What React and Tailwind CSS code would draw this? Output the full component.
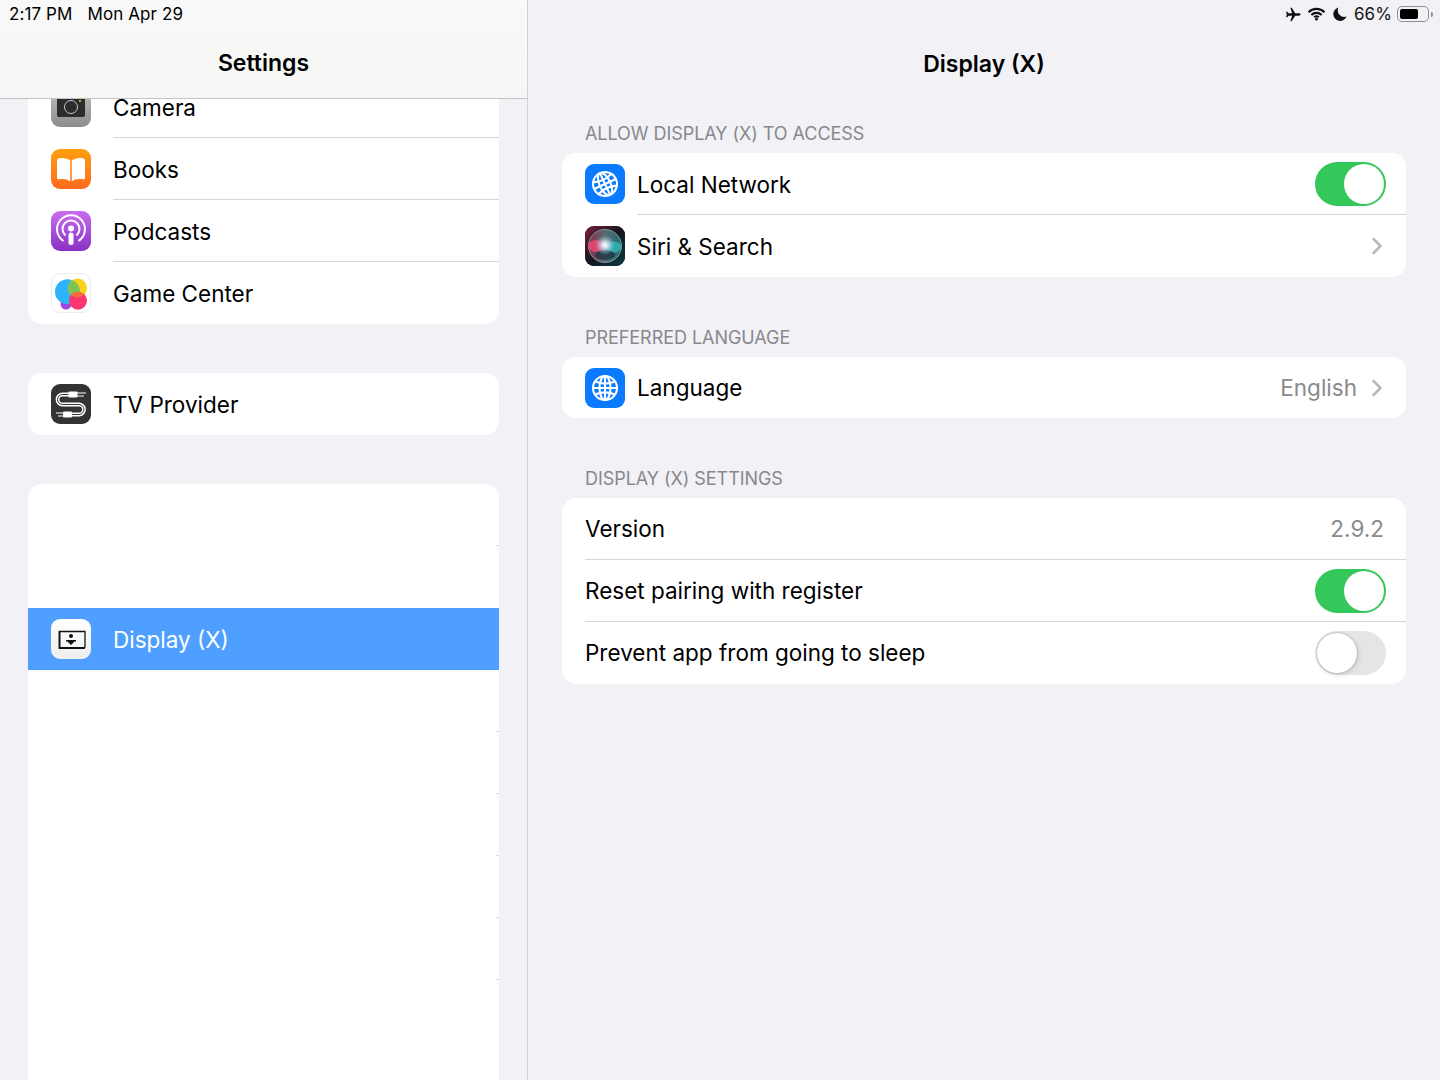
import React from 'react';
import { ChevronRight } from 'lucide-react';

const Globe = ({ tilt }) => (
    <svg viewBox="0 0 28 28" className="w-[28px] h-[28px]" fill="none" stroke="white" strokeWidth="2.1">
        <g transform={tilt ? 'rotate(-25 14 14)' : undefined}>
            <circle cx="14" cy="14" r="12" />
            <ellipse cx="14" cy="14" rx="5.5" ry="12" />
            <path d="M14 2v24M2 14h24M4 7.5c6 2.500 14 2.500 20 0M4 20.500c6-2.500 14-2.500 20 0" />
        </g>
    </svg>
);

const IconBox = ({ className, children }) => (
    <div className={`w-[40px] h-[40px] rounded-[9px] shrink-0 flex items-center justify-center overflow-hidden ${className}`}>
        {children}
    </div>
);

const CameraIcon = () => (
    <IconBox className="bg-gradient-to-b from-[#c4c4c4] to-[#8c8c8e]">
        <div className="w-[28px] h-[20px] bg-[#2c2c2e] rounded-[2px] relative flex items-center justify-center">
            <div className="w-[14px] h-[14px] rounded-full border-[1.5px] border-[#c8c8c8]" />
            <div className="absolute top-[3px] right-[4px] w-[2px] h-[2px] rounded-full bg-[#f5d90a]" />
        </div>
    </IconBox>
);

const BooksIcon = () => (
    <IconBox className="bg-gradient-to-b from-[#ff9f0a] to-[#fd6a1e]">
        <svg viewBox="0 0 28 25" className="w-[28px] h-[25px]">
            <path d="M13.200 3.500C11 1.500 5 .5 1.500 1.500 .6 1.800 0 2.500 0 3.500V21c0 1 1 1.500 2 1.300 4-.8 9-.2 11.200 2.200z" fill="white" />
            <path d="M14.800 3.500C17 1.500 23 .5 26.500 1.500 27.400 1.800 28 2.500 28 3.500V21c0 1-1 1.500-2 1.300-4-.8-9-.2-11.200 2.200z" fill="white" />
        </svg>
    </IconBox>
);

const PodcastsIcon = () => (
    <IconBox className="bg-gradient-to-b from-[#c86df0] to-[#8a2fc4]">
        <svg viewBox="0 0 34 34" className="w-[34px] h-[34px]" fill="none" stroke="white" strokeWidth="2">
            <path d="M9.500 27A14 14 0 1 1 24.500 27" />
            <path d="M11.500 21.500A8.500 8.500 0 1 1 22.500 21.500" />
            <circle cx="17" cy="14.500" r="3" fill="white" stroke="none" />
            <rect x="14.500" y="18.500" width="5" height="12.500" rx="2.500" fill="white" stroke="none" />
        </svg>
    </IconBox>
);

const GameCenterIcon = () => (
    <IconBox className="bg-white border border-[#ececec]">
        <svg viewBox="0 0 40 40" className="w-[40px] h-[40px] shrink-0">
            <defs>
                <clipPath id="gcBlue"><circle cx="16.500" cy="18.700" r="12.500" /></clipPath>
                <clipPath id="gcYellow"><circle cx="26.500" cy="15" r="9.500" /></clipPath>
            </defs>
            <circle cx="15" cy="31" r="5.500" fill="#a245e0" />
            <circle cx="16.500" cy="18.700" r="12.500" fill="#2fb4fb" />
            <circle cx="26.500" cy="15" r="9.500" fill="#f8d21f" />
            <circle cx="26.500" cy="15" r="9.500" fill="#7dc44f" clipPath="url(#gcBlue)" />
            <circle cx="27" cy="27.700" r="9" fill="#f9366f" />
            <circle cx="27" cy="27.700" r="9" fill="#f66a3c" clipPath="url(#gcYellow)" />
        </svg>
    </IconBox>
);

const TvIcon = () => (
    <IconBox className="bg-[#333335]">
        <svg viewBox="0 0 40 40" className="w-[40px] h-[40px] shrink-0" fill="none" stroke="white" strokeWidth="3.800">
            <path d="M18 10.500H11.500a5 5 0 0 0 0 10H28a5 5 0 0 1 0 10H21" />
            <path d="M18 10.500H11.500a5 5 0 0 0 0 10H28a5 5 0 0 1 0 10H21" stroke="#333335" strokeWidth="1" />
            <rect x="17.500" y="7.500" width="9" height="6" rx="1" fill="white" stroke="none" />
            <path d="M26 9h9M26 12h7" strokeWidth="1.200" />
            <rect x="12" y="27.500" width="9" height="6" rx="1" fill="white" stroke="none" />
            <path d="M12 29H5M12 32H7" strokeWidth="1.200" />
        </svg>
    </IconBox>
);

const SiriIcon = () => (
    <IconBox className="bg-[#141418]">
        <svg viewBox="0 0 40 40" className="w-[40px] h-[40px] shrink-0">
            <defs>
                <radialGradient id="siriGlow">
                    <stop offset="0" stopColor="#ffffff" />
                    <stop offset="0.3" stopColor="#e6eef6" stopOpacity="0.85" />
                    <stop offset="1" stopColor="#8fc8e8" stopOpacity="0" />
                </radialGradient>
                <linearGradient id="siriBase" x1="0" y1="0" x2="1" y2="0">
                    <stop offset="0" stopColor="#8a2b4a" />
                    <stop offset="0.5" stopColor="#5a6a70" />
                    <stop offset="1" stopColor="#1c6d74" />
                </linearGradient>
                <linearGradient id="siriCorner" x1="0" y1="0" x2="1" y2="1">
                    <stop offset="0" stopColor="#7a1f42" />
                    <stop offset="0.5" stopColor="#15151b" />
                    <stop offset="1" stopColor="#0c3a46" />
                </linearGradient>
            </defs>
            <rect width="40" height="40" fill="url(#siriCorner)" />
            <circle cx="20" cy="20" r="16.500" fill="url(#siriBase)" stroke="#7f9a9c" strokeWidth="1" />
            <ellipse cx="11" cy="20" rx="8" ry="6" fill="#e8466f" opacity="0.9" />
            <ellipse cx="29" cy="21" rx="7.500" ry="5.500" fill="#2fb3b0" opacity="0.85" />
            <ellipse cx="20" cy="29" rx="10" ry="5" fill="#123040" opacity="0.7" />
            <circle cx="20" cy="19" r="10" fill="url(#siriGlow)" />
        </svg>
    </IconBox>
);

const DisplayIcon = () => (
    <IconBox className="bg-gradient-to-b from-white to-[#eeeeee]">
        <svg viewBox="0 0 40 40" className="w-[40px] h-[40px] shrink-0" fill="#111">
            <path d="M8.500 12v17H34" fill="none" stroke="#111" strokeWidth="2" />
            <path d="M8 12.500h26v16" fill="none" stroke="#111" strokeWidth="1.300" />
            <circle cx="20" cy="17" r="2" />
            <path d="M15 21h10v1.500h-1.500L20 26l-3.500-3.500H15z" />
        </svg>
    </IconBox>
);

const Toggle = ({ on }) => (
    <div className={`w-[71px] h-[44px] rounded-full p-[2px] flex shrink-0 ${on ? 'bg-[#34c759] justify-end' : 'bg-[#e5e5e7] justify-start'}`}>
        <div className={`w-[40px] h-[40px] rounded-full bg-white ${on ? '' : 'shadow-[0_0_2px_rgba(0,0,0,0.35),2px_2px_5px_rgba(0,0,0,0.1)]'}`} />
    </div>
);

const Row = ({ icon, label, right, sidebar, active, last, short, lower }) => (
    <div className={`relative flex items-center pl-[23px] ${short ? 'h-[61px]' : 'h-[62px]'} ${active ? 'bg-[#4e9fff]' : ''}`}>
        {icon && <div className={sidebar ? 'mr-[22px]' : 'mr-[12px]'}>{icon}</div>}
        <span className={`text-[22.5px] ${sidebar || lower ? 'pt-[2px]' : ''} ${active ? 'text-white' : 'text-black'}`}>{label}</span>
        <div className="ml-auto pr-[20px] flex items-center">{right}</div>
        {!last && <div className={`absolute bottom-0 right-0 h-px bg-[#d6d6d9] ${sidebar ? 'left-[85px]' : icon ? 'left-[75px]' : 'left-[23px]'}`} />}
    </div>
);

const Chevron = () => <ChevronRight size={28} strokeWidth={2.2} className="text-[#b9b9bd] ml-[4px] -mr-[5px]" />;

const Value = ({ children }) => <span className="text-[22.5px] text-[#8a8a8e] mr-[2px]">{children}</span>;

const Section = ({ title, children }) => (
    <div>
        <div className="h-[33px] pt-[1px] pl-[23px] text-[18px] leading-[26px] text-[#88888d] uppercase tracking-[-0.05px]">{title}</div>
        <div className="bg-white rounded-[14px] overflow-hidden">{children}</div>
    </div>
);

const Tick = () => <div className="h-[62px] relative"><div className="absolute bottom-0 right-0 w-[3px] h-px bg-[#dcdcdf]" /></div>;

const Sidebar = () => (
    <div className="w-[528px] h-full shrink-0 flex flex-col border-r border-[#d2d2d6]">
        <div className="h-[99px] shrink-0 border-b border-[#c4c4c6] bg-gradient-to-b from-[#f9f9f9] to-[#f6f6f4] relative z-10">
            <div className="h-[28px] pl-[9px] text-[17px] leading-[28px] text-black flex gap-[15px] tracking-[0.1px]">
                <span>2:17 PM</span>
                <span>Mon Apr 29</span>
            </div>
            <div className="text-center font-semibold text-[23px] leading-[70px] text-black">Settings</div>
        </div>
        <div className="flex-1 overflow-hidden px-[28px] flex flex-col gap-[49px]">
            <div className="bg-white rounded-[14px] -mt-[23px]">
                <Row sidebar icon={<CameraIcon />} label="Camera" />
                <Row sidebar icon={<BooksIcon />} label="Books" />
                <Row sidebar icon={<PodcastsIcon />} label="Podcasts" />
                <Row sidebar icon={<GameCenterIcon />} label="Game Center" last />
            </div>
            <div className="bg-white rounded-[14px]">
                <Row sidebar icon={<TvIcon />} label="TV Provider" last />
            </div>
            <div className="bg-white rounded-t-[14px] flex-1">
                <Tick />
                <div className="h-[62px]" />
                <Row sidebar icon={<DisplayIcon />} label="Display (X)" active last />
                <Tick />
                <Tick />
                <Tick />
                <Tick />
                <Tick />
            </div>
        </div>
    </div>
);

const Detail = () => (
    <div className="flex-1 h-full flex flex-col">
        <div className="h-[28px] shrink-0 pr-[7px] flex items-center justify-end text-[#111]">
            <svg viewBox="0 0 18 16" className="w-[16px] h-[15px] mr-[6px]" fill="#111">
                <path d="M17.500 8c0-.8-1-1.300-2-1.300h-4L7.500.5H6l2 6.200H4L2.500 5H1.200l.8 3-.8 3h1.300L4 9.300h4L6 15.500h1.500l4-6.200h4c1 0 2-.5 2-1.300z" />
            </svg>
            <svg viewBox="0 0 20 15" className="w-[19px] h-[14px] mr-[7px]" fill="none" stroke="#111" strokeWidth="2.300">
                <path d="M1.500 5.500a12 12 0 0 1 17 0M4.500 8.500a8 8 0 0 1 11 0M7.500 11a3.800 3.800 0 0 1 5 0" />
                <circle cx="10" cy="13" r="1.500" fill="#111" stroke="none" />
            </svg>
            <svg viewBox="0 0 14 14" className="w-[14px] h-[14px] mr-[7px]" fill="#111">
                <path d="M5.500.5A6.800 6.800 0 1 0 13.500 9.500 6.500 6.500 0 0 1 5.500.5z" />
            </svg>
            <span className="text-[17px] leading-[28px] tracking-[0.1px] mr-[5px]">66%</span>
            <div className="flex items-center">
                <div className="w-[32px] h-[16px] rounded-[5px] border border-[#8e8e93] p-[2px]">
                    <div className="w-[18px] h-full rounded-[2px] bg-black" />
                </div>
                <div className="w-[2px] h-[5px] ml-[2px] rounded-r bg-[#8e8e93]" />
            </div>
        </div>
        <div className="h-[70px] shrink-0 pt-[1px] text-center font-semibold text-[23px] leading-[70px] text-black">Display (X)</div>
        <div className="px-[34px] pt-[22px] flex flex-col gap-[47px]">
            <Section title="Allow Display (X) to Access">
                <Row lower icon={<IconBox className="bg-[#0a7aff]"><Globe tilt /></IconBox>} label="Local Network" right={<Toggle on />} />
                <Row lower icon={<SiriIcon />} label="Siri & Search" right={<Chevron />} last />
            </Section>
            <Section title="Preferred Language">
                <Row short icon={<IconBox className="bg-[#0a7aff]"><Globe /></IconBox>} label="Language" right={<><Value>English</Value><Chevron /></>} last />
            </Section>
            <Section title="Display (X) Settings">
                <Row label="Version" right={<Value>2.9.2</Value>} />
                <Row label="Reset pairing with register" right={<Toggle on />} />
                <Row label="Prevent app from going to sleep" right={<Toggle />} last />
            </Section>
        </div>
    </div>
);

const App = () => (
    <div className="w-[1440px] h-[1080px] flex overflow-hidden bg-[#f1f1f6] font-['Inter',sans-serif]">
        <Sidebar />
        <Detail />
    </div>
);

export default App;
